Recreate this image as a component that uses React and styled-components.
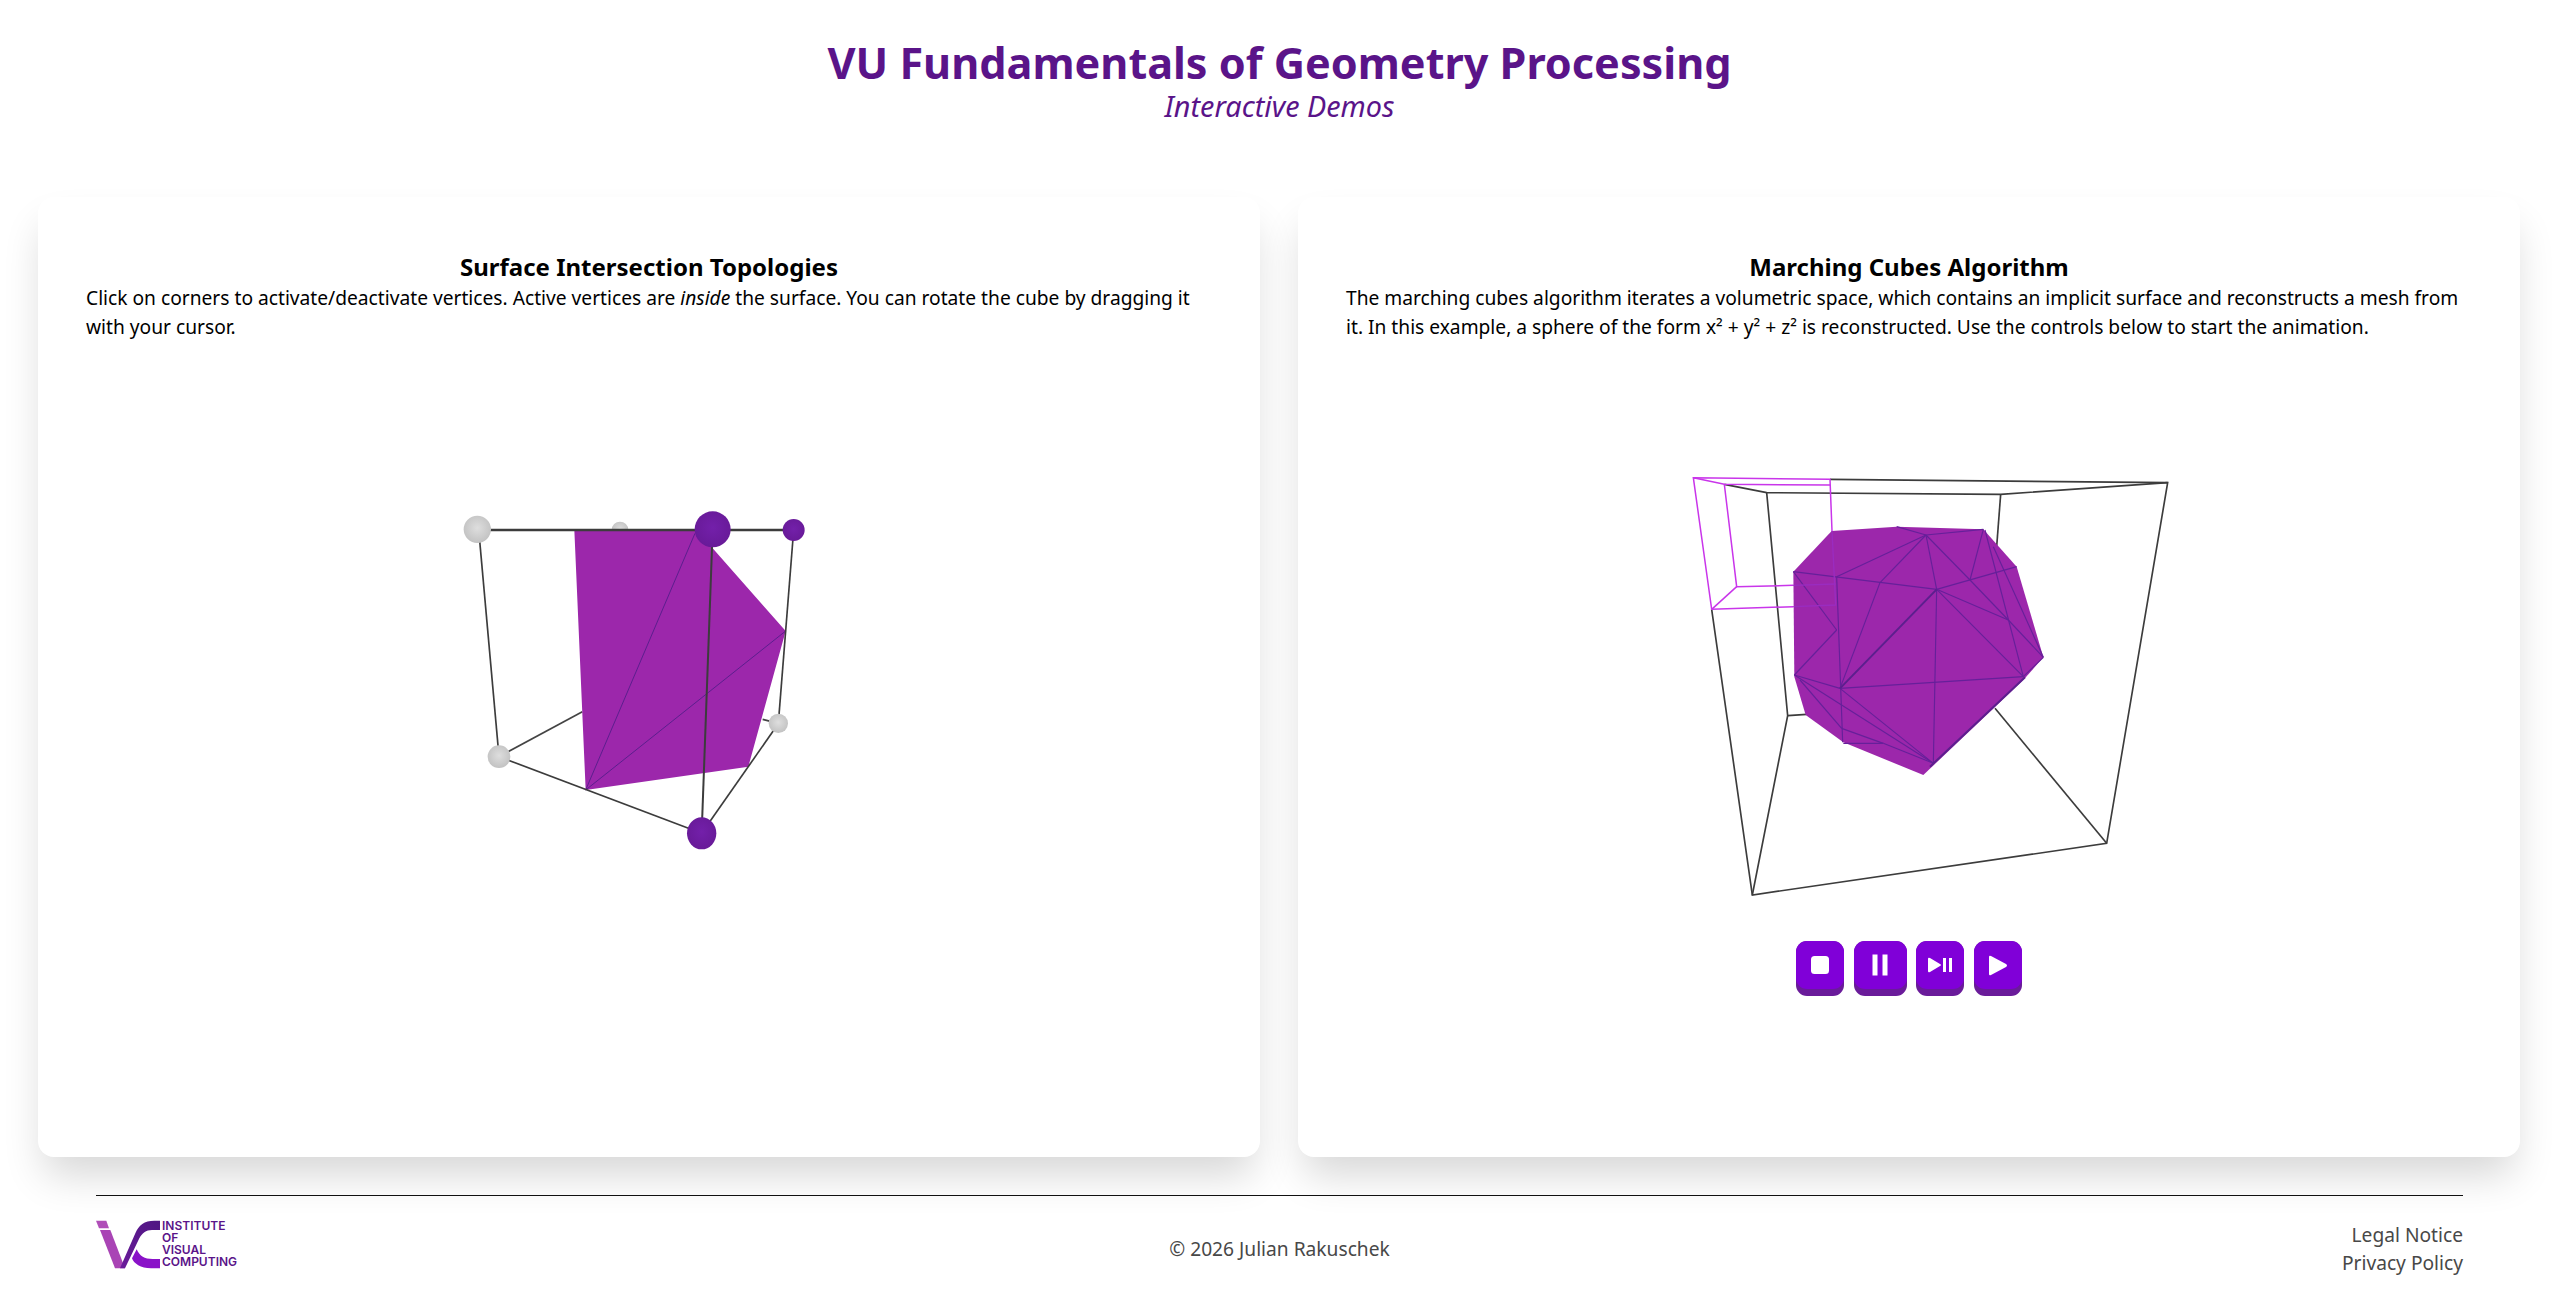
import styled, { createGlobalStyle } from "styled-components"

const GlobalStyle = createGlobalStyle`
  html, body {
    margin: 0;
    padding: 0;
    background: #fff;
    font-family: "Noto Sans", sans-serif;
    color: #000;
  }
`

const Page = styled.div`
  width: 2559px;
  height: 1302px;
  overflow: hidden;
  display: flex;
  flex-direction: column;
`

const Header = styled.header`
  height: 197px;
  text-align: center;
  color: #5a1489;
  padding-top: 35px;
  box-sizing: border-box;
`

const Title = styled.h1`
  margin: 0;
  font-size: 43.2px;
  line-height: 56px;
  font-weight: 700;
`

const Subtitle = styled.div`
  font-size: 28.8px;
  line-height: 30px;
  font-style: italic;
`

const Cards = styled.main`
  display: grid;
  grid-template-columns: 1222px 1222px;
  column-gap: 38px;
  padding: 0 39px 0 38px;
  height: 960px;
`

const Card = styled.section`
  background: #fff;
  border-radius: 16px;
  padding: 48px 48px 0;
  box-shadow: 0 24px 40px -6px rgba(0, 0, 0, 0.16);
  position: relative;
`

const CardTitle = styled.h2`
  margin: 0;
  text-align: center;
  font-size: 24px;
  line-height: 30px;
  font-weight: 700;
  padding-top: 7px;
`

const CardText = styled.p`
  margin: 1px 0 0;
  font-size: 19.2px;
  line-height: 29px;
`

const Stage = styled.div`
  display: flex;
  flex-direction: column;
  align-items: center;
  margin-top: ${(p) => p.$top}px;
`

const SceneSvg = styled.svg`
  display: block;
  margin-left: ${(p) => p.$shift}px;
`

const Controls = styled.div`
  display: flex;
  gap: 9.5px;
  margin-top: 31px;
`

const ControlButton = styled.button`
  width: ${(p) => p.$w}px;
  height: 55px;
  padding: 0;
  border: 0;
  border-radius: 11px;
  background: #6a1b9a;
  display: flex;
  align-items: flex-start;
`

const ButtonFace = styled.span`
  width: 100%;
  height: 48px;
  border-radius: 11px;
  background: #8000d8;
  display: flex;
  align-items: center;
  justify-content: center;
`

const Footer = styled.footer`
  margin: 38px 96px 0;
  border-top: 1.5px solid #111;
  display: grid;
  grid-template-columns: 1fr auto 1fr;
  align-items: center;
  height: 107px;
  box-sizing: border-box;
  color: #484848;
  font-size: 19.2px;
  line-height: 28px;
`

const Logo = styled.div`
  display: flex;
  align-items: center;
  gap: 1px;
  margin-bottom: 10px;
`

const LogoText = styled.div`
  font-family: Inter, sans-serif;
  font-size: 12px;
  line-height: 11.8px;
  font-weight: 600;
  color: #5a1489;
`

const Copyright = styled.div`
  text-align: center;
`

const Links = styled.nav`
  text-align: right;
`

const Sphere = ({ x, y, r, ry, tone }) => (
  <ellipse cx={x} cy={y} rx={r} ry={ry || r} fill={`url(#${tone})`} />
)

const leftEdgesBack = [
  [237, 860, 487, 725],
  [1028, 748, 1075, 760],
]

const leftEdgesFront = [
  [172, 180, 1121, 180, 7],
  [176, 178, 237, 860, 5],
  [237, 860, 845, 1090, 5],
  [878, 178, 845, 1090, 6],
  [1121, 180, 1075, 760, 5],
  [1070, 768, 845, 1090, 5],
]

const SurfaceScene = () => (
  <SceneSvg width="420" height="400" viewBox="0 0 1260 1200" $shift={-38}>
    <defs>
      <radialGradient id="gray" cx="50%" cy="45%" r="55%">
        <stop offset="0%" stopColor="#dedede" />
        <stop offset="100%" stopColor="#c2c2c2" />
      </radialGradient>
      <radialGradient id="violet" cx="50%" cy="45%" r="55%">
        <stop offset="0%" stopColor="#7320aa" />
        <stop offset="100%" stopColor="#681a98" />
      </radialGradient>
    </defs>
    <Sphere x={600} y={180} r={25} tone="gray" />
    {leftEdgesBack.map(([a, b, c, d]) => (
      <line key={a} x1={a} y1={b} x2={c} y2={d} stroke="#444" strokeWidth="5" />
    ))}
    <polygon points="463,180 878,180 878,235 1097,483 985,890 497,960" fill="#9c27ab" />
    <line x1="497" y1="960" x2="825" y2="190" stroke="#5c1f8e" strokeWidth="3" />
    <line x1="497" y1="960" x2="1097" y2="483" stroke="#5c1f8e" strokeWidth="3" />
    {leftEdgesFront.map(([a, b, c, d, w]) => (
      <line key={`${a}-${b}-${c}`} x1={a} y1={b} x2={c} y2={d} stroke="#3c3c3c" strokeWidth={w} />
    ))}
    <Sphere x={172} y={178} r={41} tone="gray" />
    <Sphere x={237} y={860} r={34} tone="gray" />
    <Sphere x={1075} y={760} r={29} tone="gray" />
    <Sphere x={878} y={178} r={54} tone="violet" />
    <Sphere x={1121} y={180} r={33} tone="violet" />
    <Sphere x={845} y={1090} r={44} ry={48} tone="violet" />
  </SceneSvg>
)

const cubeBack = [
  "193,103 320,128 1022,133 1523,98",
  "320,128 383,797 277,1335",
  "383,797 440,793",
  "1022,133 1010,290",
  "1005,775 1340,1180",
]

const cubeFront = "510,88 1523,98 1340,1180 277,1335 155,478"

const meshLines = [
  [400, 365, 830, 418],
  [530, 380, 798, 255],
  [798, 255, 970, 238],
  [710, 230, 798, 255],
  [798, 255, 830, 418],
  [798, 255, 660, 398],
  [660, 398, 540, 715],
  [830, 418, 1090, 680],
  [830, 418, 1070, 350],
  [830, 418, 820, 940],
  [970, 238, 930, 390],
  [798, 255, 930, 390],
  [930, 390, 1045, 510],
  [830, 418, 1045, 510],
  [975, 240, 1090, 680],
  [1045, 510, 1150, 622],
  [1000, 290, 1150, 622],
  [400, 365, 530, 540],
  [530, 380, 548, 877],
  [530, 540, 403, 675],
  [403, 675, 540, 715],
  [540, 715, 1090, 680],
  [540, 715, 820, 940],
  [403, 675, 820, 940],
  [420, 690, 545, 835],
  [545, 835, 670, 880],
  [550, 880, 670, 880],
  [670, 880, 820, 940],
  [1150, 622, 1090, 680],
]

const thickLines = [
  [830, 418, 540, 715],
  [1095, 682, 810, 950],
]

const pinkBox = [
  "516,243 510,88 100,83 155,478 400,470",
  "100,83 193,103 510,105",
  "193,103 230,410 400,406",
  "230,410 155,478",
]

const pinkOverMesh = [
  "516,243 527,465 400,470",
  "527,402 400,406",
]

const CubesScene = () => (
  <SceneSvg width="520" height="460" viewBox="0 0 1560 1380" $shift={22}>
    {cubeBack.map((pts) => (
      <polyline key={pts} points={pts} fill="none" stroke="#3c3c3c" strokeWidth="5" />
    ))}
    <polygon
      points="515,243 710,230 970,238 1070,350 1150,622 1090,690 790,975 550,877 437,795 403,680 400,365"
      fill="#9c27ab"
    />
    {meshLines.map(([a, b, c, d]) => (
      <line key={`${a}-${b}-${c}-${d}`} x1={a} y1={b} x2={c} y2={d} stroke="#66209a" strokeWidth="3.5" />
    ))}
    {thickLines.map(([a, b, c, d]) => (
      <line key={`${a}-${b}`} x1={a} y1={b} x2={c} y2={d} stroke="#5c1f8e" strokeWidth="6" />
    ))}
    <polyline points={cubeFront} fill="none" stroke="#3c3c3c" strokeWidth="5" />
    {pinkBox.map((pts) => (
      <polyline key={pts} points={pts} fill="none" stroke="#c935ea" strokeWidth="4.5" />
    ))}
    {pinkOverMesh.map((pts) => (
      <polyline key={pts} points={pts} fill="none" stroke="#9a2cc0" strokeWidth="4" />
    ))}
  </SceneSvg>
)

const StopIcon = () => (
  <svg width="20" height="20" viewBox="0 0 20 20">
    <rect x="1" y="1" width="18" height="18" rx="3.5" fill="#fff" />
  </svg>
)

const PauseIcon = () => (
  <svg width="20" height="24" viewBox="0 0 20 24">
    <rect x="2.5" y="1.5" width="5" height="21" fill="#fff" />
    <rect x="12.5" y="1.5" width="5" height="21" fill="#fff" />
  </svg>
)

const StepIcon = () => (
  <svg width="26" height="16" viewBox="0 0 26 16">
    <path d="M1 2 Q1 0 3 1 L13 7 Q15 8 13 9 L3 15 Q1 16 1 14 Z" fill="#fff" />
    <rect x="16" y="1" width="3" height="14" fill="#fff" />
    <rect x="22" y="1" width="3" height="14" fill="#fff" />
  </svg>
)

const PlayIcon = () => (
  <svg width="20" height="21" viewBox="0 0 20 21">
    <path d="M1 2 Q1 0 3 1 L18 9 Q20 10.5 18 12 L3 20 Q1 21 1 19 Z" fill="#fff" />
  </svg>
)

const LogoMark = () => (
  <svg width="65" height="49" viewBox="0 0 195 147">
    <defs>
      <linearGradient id="logoDark" x1="0" y1="1" x2="1" y2="0">
        <stop offset="0%" stopColor="#6a1b9a" />
        <stop offset="100%" stopColor="#4f1682" />
      </linearGradient>
    </defs>
    <polygon points="0,2 31,2 39,25 9,25" fill="#b04fb8" />
    <polygon points="12,30 43,30 87,145 57,145" fill="#a944b5" />
    <path
      d="M72 145 L118 40 C128 15 145 2 175 2 L192 2 L192 30 L168 30 C150 30 138 40 130 55 L87 145 Z"
      fill="url(#logoDark)"
    />
    <path
      d="M122 88 C132 110 145 117 170 117 L192 117 L192 145 L165 145 C135 145 112 130 108 115 Z"
      fill="#8a12c8"
    />
  </svg>
)

const controls = [
  { width: 48, icon: <StopIcon /> },
  { width: 53, icon: <PauseIcon /> },
  { width: 48, icon: <StepIcon /> },
  { width: 48, icon: <PlayIcon /> },
]

export default function App() {
  return (
    <Page>
      <GlobalStyle />
      <Header>
        <Title>VU Fundamentals of Geometry Processing</Title>
        <Subtitle>Interactive Demos</Subtitle>
      </Header>
      <Cards>
        <Card>
          <CardTitle>Surface Intersection Topologies</CardTitle>
          <CardText>
            Click on corners to activate/deactivate vertices. Active vertices are <em>inside</em> the surface. You can
            rotate the cube by dragging it with your cursor.
          </CardText>
          <Stage $top={129}>
            <SurfaceScene />
          </Stage>
        </Card>
        <Card>
          <CardTitle>Marching Cubes Algorithm</CardTitle>
          <CardText>
            The marching cubes algorithm iterates a volumetric space, which contains an implicit surface and
            reconstructs a mesh from it. In this example, a sphere of the form x² + y² + z² is reconstructed. Use the
            controls below to start the animation.
          </CardText>
          <Stage $top={109}>
            <CubesScene />
            <Controls>
              {controls.map((c, i) => (
                <ControlButton key={i} $w={c.width}>
                  <ButtonFace>{c.icon}</ButtonFace>
                </ControlButton>
              ))}
            </Controls>
          </Stage>
        </Card>
      </Cards>
      <Footer>
        <Logo>
          <LogoMark />
          <LogoText>
            INSTITUTE
            <br />
            OF
            <br />
            VISUAL
            <br />
            COMPUTING
          </LogoText>
        </Logo>
        <Copyright>© 2026 Julian Rakuschek</Copyright>
        <Links>
          Legal Notice
          <br />
          Privacy Policy
        </Links>
      </Footer>
    </Page>
  )
}
